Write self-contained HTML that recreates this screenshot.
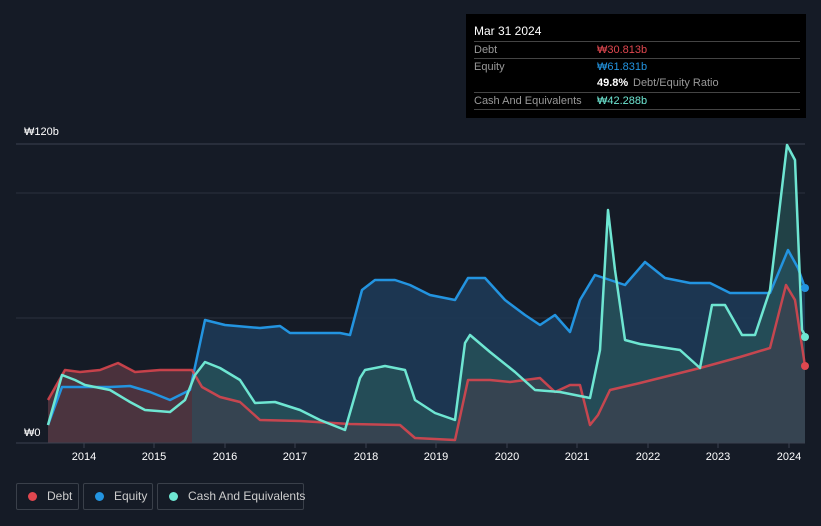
<!DOCTYPE html>
<html><head><meta charset="utf-8"><style>
html,body{margin:0;width:821px;height:526px;overflow:hidden}
body{background:#151b26;font-family:"Liberation Sans",sans-serif;position:relative}
.tt{position:absolute;left:466px;top:14px;width:340px;height:104px;background:#000;color:#fff;font-size:11px}
.tt .r{position:absolute;left:8px;right:6px;border-top:1px solid #444;height:17px;line-height:17px;color:#999}
.lg{position:absolute;top:483px;height:27px;border:1px solid #3a404a;border-radius:2px;color:#ccc;font-size:12px;line-height:25px;box-sizing:border-box;white-space:nowrap}
.lg i{display:inline-block;width:9px;height:9px;border-radius:50%;margin:0 10px 0 11px;vertical-align:-1px}
</style></head><body>
<svg width="821" height="526" style="position:absolute;left:0;top:0">
<line x1="16" x2="805" y1="144" y2="144" stroke="#3a4250"/>
<line x1="16" x2="805" y1="193" y2="193" stroke="#2a313d"/>
<line x1="16" x2="805" y1="318" y2="318" stroke="#2a313d"/>
<path d="M48,425 L62,387 L110,387 L130,386 L150,392 L170,400 L190,390 L205,320 L225,325 L260,328 L280,326 L290,333 L340,333 L350,335 L362,290 L375,280 L395,280 L410,285 L430,295 L455,300 L468,278 L485,278 L505,300 L525,315 L540,325 L555,315 L570,332 L580,300 L595,275 L610,280 L625,285 L645,262 L665,278 L690,283 L710,283 L730,293 L770,293 L788,250 L798,268 L805,288 L805,443 L48,443Z" fill="#1d3a57" opacity="0.9"/>
<path d="M48,425 L62,375 L75,380 L85,385 L110,390 L130,402 L145,410 L170,412 L185,400 L195,375 L205,362 L220,368 L240,380 L255,403 L275,402 L300,410 L320,420 L345,430 L360,378 L365,370 L385,366 L405,370 L415,400 L435,413 L455,420 L465,343 L470,335 L490,352 L515,372 L535,390 L560,392 L575,395 L590,398 L600,350 L608,210 L615,270 L625,340 L640,344 L660,347 L680,350 L700,368 L712,305 L725,305 L742,335 L755,335 L770,290 L787,145 L795,160 L802,330 L805,335 L805,443 L48,443Z" fill="#2a5b5c" opacity="0.6"/>
<path d="M48,400 L65,370 L80,372 L100,370 L118,363 L135,372 L160,370 L192,370 L202,387 L220,397 L240,402 L260,420 L300,421 L350,424 L400,425 L415,438 L455,440 L468,380 L490,380 L510,382 L540,378 L555,392 L570,385 L580,385 L590,425 L598,415 L610,390 L640,383 L660,378 L700,368 L740,357 L770,348 L786,285 L795,300 L805,366 L805,443 L48,443Z" fill="#3a4350" opacity="0.85"/>
<path d="M48,400 L65,370 L80,372 L100,370 L118,363 L135,372 L160,370 L192,370 L192,443 L48,443Z" fill="#5a2a33" opacity="0.6"/>
<path d="M48,425 L62,387 L110,387 L130,386 L150,392 L170,400 L190,390 L205,320 L225,325 L260,328 L280,326 L290,333 L340,333 L350,335 L362,290 L375,280 L395,280 L410,285 L430,295 L455,300 L468,278 L485,278 L505,300 L525,315 L540,325 L555,315 L570,332 L580,300 L595,275 L610,280 L625,285 L645,262 L665,278 L690,283 L710,283 L730,293 L770,293 L788,250 L798,268 L805,288" fill="none" stroke="#2394e0" stroke-width="2.5" stroke-linejoin="round"/>
<path d="M48,400 L65,370 L80,372 L100,370 L118,363 L135,372 L160,370 L192,370 L202,387 L220,397 L240,402 L260,420 L300,421 L350,424 L400,425 L415,438 L455,440 L468,380 L490,380 L510,382 L540,378 L555,392 L570,385 L580,385 L590,425 L598,415 L610,390 L640,383 L660,378 L700,368 L740,357 L770,348 L786,285 L795,300 L805,366" fill="none" stroke="#e0474f" stroke-width="2.5" stroke-linejoin="round" opacity="0.85"/>
<path d="M48,425 L62,375 L75,380 L85,385 L110,390 L130,402 L145,410 L170,412 L185,400 L195,375 L205,362 L220,368 L240,380 L255,403 L275,402 L300,410 L320,420 L345,430 L360,378 L365,370 L385,366 L405,370 L415,400 L435,413 L455,420 L465,343 L470,335 L490,352 L515,372 L535,390 L560,392 L575,395 L590,398 L600,350 L608,210 L615,270 L625,340 L640,344 L660,347 L680,350 L700,368 L712,305 L725,305 L742,335 L755,335 L770,290 L787,145 L795,160 L802,330 L805,335" fill="none" stroke="#6ee6d2" stroke-width="2.5" stroke-linejoin="round"/>
<circle cx="805" cy="288" r="4" fill="#2394e0"/><circle cx="805" cy="337" r="4" fill="#6ee6d2"/><circle cx="805" cy="366" r="4" fill="#e0474f"/>
<line x1="16" x2="805" y1="443" y2="443" stroke="#3a4250"/>
<g stroke="#3a4250"><line x1="84" x2="84" y1="443" y2="448"/><line x1="154" x2="154" y1="443" y2="448"/><line x1="225" x2="225" y1="443" y2="448"/><line x1="295" x2="295" y1="443" y2="448"/><line x1="366" x2="366" y1="443" y2="448"/><line x1="436" x2="436" y1="443" y2="448"/><line x1="507" x2="507" y1="443" y2="448"/><line x1="577" x2="577" y1="443" y2="448"/><line x1="648" x2="648" y1="443" y2="448"/><line x1="718" x2="718" y1="443" y2="448"/><line x1="789" x2="789" y1="443" y2="448"/></g>
<g fill="#fff" font-size="11" text-anchor="middle"><text x="84" y="460">2014</text><text x="154" y="460">2015</text><text x="225" y="460">2016</text><text x="295" y="460">2017</text><text x="366" y="460">2018</text><text x="436" y="460">2019</text><text x="507" y="460">2020</text><text x="577" y="460">2021</text><text x="648" y="460">2022</text><text x="718" y="460">2023</text><text x="789" y="460">2024</text></g>
<text x="24" y="135" fill="#fff" font-size="11">₩120b</text>
<text x="24" y="436" fill="#fff" font-size="11">₩0</text>
</svg>
<div class="tt">
<div style="position:absolute;left:8px;top:10px;font-size:12px">Mar 31 2024</div>
<div class="r" style="top:27px">Debt<span style="position:absolute;left:123px;color:#e0474f">₩30.813b</span></div>
<div class="r" style="top:44px">Equity<span style="position:absolute;left:123px;color:#2394e0">₩61.831b</span></div>
<div class="r" style="top:61px;border:0"><span style="position:absolute;left:123px;color:#fff;font-weight:bold">49.8%</span><span style="position:absolute;left:159px">Debt/Equity Ratio</span></div>
<div class="r" style="top:78px">Cash And Equivalents<span style="position:absolute;left:123px;color:#6ee6d2">₩42.288b</span></div>
<div class="r" style="top:95px;height:0"></div>
</div>
<div class="lg" style="left:16px;width:63px"><i style="background:#e0474f"></i>Debt</div>
<div class="lg" style="left:83px;width:70px"><i style="background:#2394e0"></i>Equity</div>
<div class="lg" style="left:157px;width:147px"><i style="background:#6ee6d2"></i>Cash And Equivalents</div>
</body></html>
